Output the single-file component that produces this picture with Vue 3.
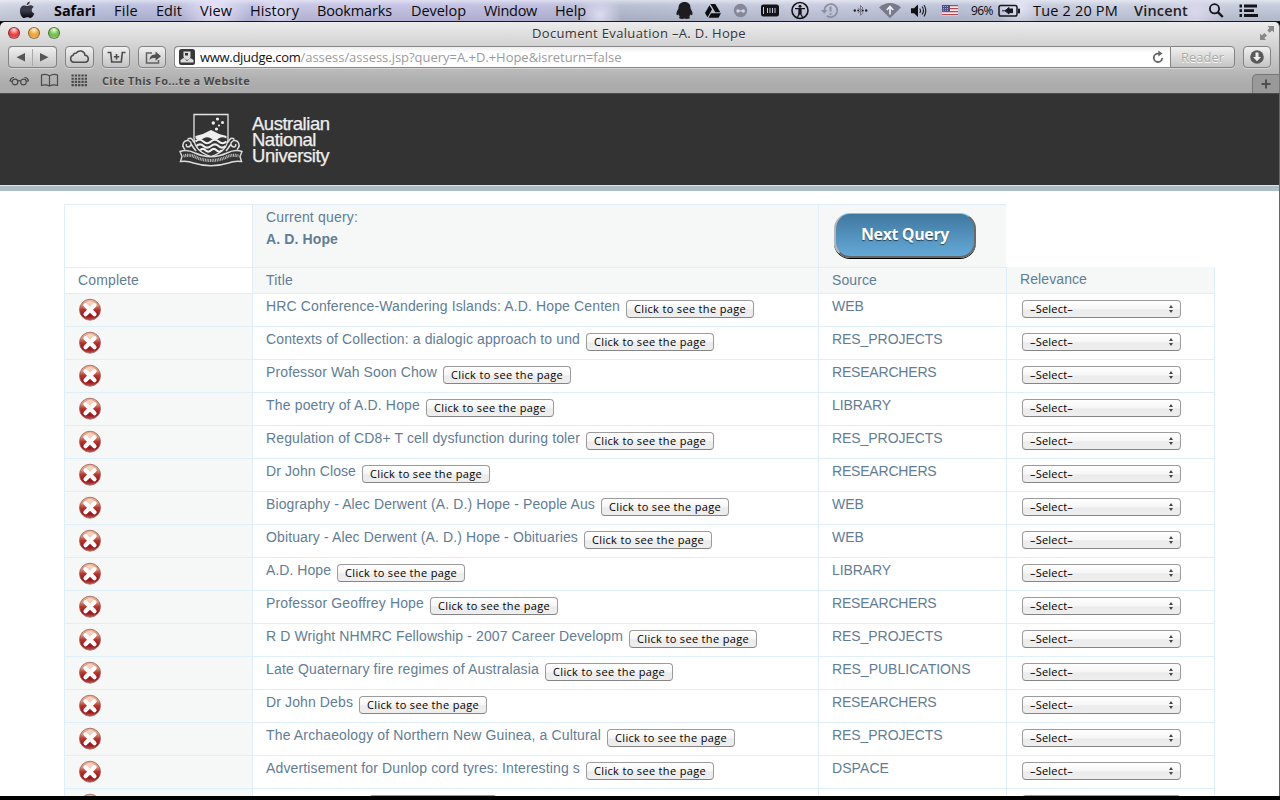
<script setup>
// Adjusts letter spacing so that a label takes a given width in pixels.
const vFit = {
  mounted(el, { value }) {
    const w = el.getBoundingClientRect().width
    el.style.letterSpacing = (value - w) / el.textContent.length + 'px'
  },
}

const menuSpec = [
  ['Safari', 54, 41.5], ['File', 114, 24], ['Edit', 156, 26], ['View', 200, 32], ['History', 250, 49],
  ['Bookmarks', 317, 75], ['Develop', 411, 55], ['Window', 484, 53], ['Help', 555, 31],
]
const menus = menuSpec.map(([label, x, w], i) => {
  const prev = i ? menuSpec[i - 1][1] + menuSpec[i - 1][2] : 0
  return { label, w, gap: x - prev }
})

const rows = [
  ['HRC Conference-Wandering Islands: A.D. Hope Centen', 354, 'WEB', 32],
  ['Contexts of Collection: a dialogic approach to und', 314, 'RES_PROJECTS', 110.5],
  ['Professor Wah Soon Chow', 171, 'RESEARCHERS', 104.5],
  ['The poetry of A.D. Hope', 154, 'LIBRARY', 59],
  ['Regulation of CD8+ T cell dysfunction during toler', 314, 'RES_PROJECTS', 110.5],
  ['Dr John Close', 90, 'RESEARCHERS', 104.5],
  ['Biography - Alec Derwent (A. D.) Hope - People Aus', 329, 'WEB', 32],
  ['Obituary - Alec Derwent (A. D.) Hope - Obituaries', 312, 'WEB', 32],
  ['A.D. Hope', 65, 'LIBRARY', 59],
  ['Professor Geoffrey Hope', 158, 'RESEARCHERS', 104.5],
  ['R D Wright NHMRC Fellowship - 2007 Career Developm', 357, 'RES_PROJECTS', 110.5],
  ['Late Quaternary fire regimes of Australasia', 273, 'RES_PUBLICATIONS', 138.5],
  ['Dr John Debs', 87, 'RESEARCHERS', 104.5],
  ['The Archaeology of Northern New Guinea, a Cultural', 335, 'RES_PROJECTS', 110.5],
  ['Advertisement for Dunlop cord tyres: Interesting s', 314, 'DSPACE', 57],
  ['Dr Graeme Farr', 97, 'RESEARCHERS', 104.5],
].map(([title, tw, source, sw]) => ({ title, tw, source, sw }))
</script>

<template>
  <div class="screen">
    <header class="menubar">
      <svg class="apple" viewBox="0 0 16 18" width="16" height="18">
        <defs>
          <linearGradient id="ap" x1="0" y1="0" x2="0" y2="1">
            <stop offset="0" stop-color="#34343c" /><stop offset=".55" stop-color="#3a3c4c" /><stop offset="1" stop-color="#05050c" />
          </linearGradient>
        </defs>
        <path fill="url(#ap)" d="M10.8 .6c.1 2-1.3 3.6-3.2 3.7C7.500 2.600 9 .9 10.800 .6zM8 5c.9 0 1.800-.8 3.300-.8 1.500 0 2.700.7 3.400 1.700-2.900 1.800-2.400 5.400.6 6.600-.7 2-2.200 4.500-3.900 4.500-1.200 0-1.600-.7-3-.7s-1.900.7-3 .7C3 17 .9 13.200.9 9.900.9 6.400 3 4.400 5.200 4.400 6.400 4.400 7.300 5 8 5z" />
      </svg>
      <nav class="menus">
        <span v-for="m in menus" :key="m.label" class="menu" :style="{ marginLeft: m.gap + 'px', width: m.w + 'px' }"><span v-fit="m.w" class="t">{{ m.label }}</span></span>
      </nav>
      <div class="status">
        <svg width="290" height="22" viewBox="675 0 290 22">
          <path fill="#1d1d20" d="M684.500 2c4 0 6 2.600 6 5.800 0 .8.300 1.300.7 2 1 1.700 1.600 3.600 1.200 5-.4.800-1 .3-1.800-.5-.3 1-.8 1.700-1.400 2.300 1 .4 1 2-.6 2.200-1.800.2-3 .2-4.100-.3-1.100.5-2.300.5-4.100.3-1.600-.2-1.600-1.800-.6-2.200-.6-.6-1.100-1.300-1.400-2.300-.8.800-1.400 1.300-1.800.5-.4-1.400.2-3.300 1.200-5 .4-.7.700-1.200.7-2C678.500 4.600 680.500 2 684.500 2z" />
          <g fill="#0c0c0e">
            <path d="M710.300 4h5l5 8.300h-5z" /><path d="M709.500 5.200l2.500 4.200-4.500 7.800-2.500-4.200z" /><path d="M711 13.300h10l-2.500 4.500h-10z" />
          </g>
          <circle cx="740.500" cy="10.500" r="6.700" fill="#85879a" />
          <g fill="#d4d5e2"><circle cx="738" cy="11" r="1.700" /><circle cx="743.300" cy="11" r="1.700" /><path d="M737.500 10.300h6.300v1.200h-6.300z" /></g>
          <rect x="761" y="4.500" width="18" height="12" rx="2.500" fill="#141418" />
          <path d="M763.500 7v7M767.500 8v5M770 8v5M772.500 8v5M775 8v5" stroke="#c9cadd" stroke-width="1" />
          <circle cx="800" cy="10.500" r="8" fill="none" stroke="#141418" stroke-width="1.600" />
          <circle cx="800" cy="6.300" r="1.500" fill="#141418" />
          <path d="M795 8.700h10M800 9v4l-2.500 4M800 13l2.500 4M799 9h2v4.500h-2z" stroke="#141418" stroke-width="1.300" fill="#141418" />
          <g stroke="#8d8fa0" fill="none" stroke-width="1.800">
            <path d="M824.300 10.500a6.500 6.500 0 1 1 2.500 5.200" /><path d="M830.500 6.500v5" stroke-width="2" /><path d="M830.500 13.200v1.600" stroke-width="2" />
          </g>
          <path d="M821 10h6.500l-3.200 3.800z" fill="#8d8fa0" />
          <path d="M858 7.800l5 5-2.500 2.500V5.500L863 8l-5 5" fill="none" stroke="#787a8a" stroke-width="1" />
          <g fill="#1f1f28"><circle cx="854.800" cy="10.500" r="1.200" /><circle cx="858.200" cy="10.500" r="1" /><circle cx="862.800" cy="10.500" r="1" /><circle cx="866.200" cy="10.500" r="1.200" /></g>
          <path d="M879 7.500c6-6 16-6 22 0l-11 10.800z" fill="#787a8a" />
          <path d="M890 14.500V7M886.800 10l3.200-3.400 3.200 3.400" stroke="#eceef8" stroke-width="1.700" fill="none" />
          <path d="M911 8.300h3l4-3.800v12.500l-4-3.800h-3z" fill="#111" />
          <path d="M919.800 8.500q1.600 2.200 0 4.500M922 6.500q3 4 0 8M924 5q3.600 5.700 0 11.500" fill="none" stroke="#1a1a20" stroke-width="1.100" />
          <rect x="942" y="5" width="16" height="11" fill="#f2eaee" />
          <path d="M942 5.600h16M942 8.600h16M942 11.600h16M942 14.600h16" stroke="#b6474f" stroke-width="1.400" />
          <rect x="942" y="5" width="8" height="6.500" fill="#4a4f88" />
          <path d="M943 6.500h6M943 8.500h6M943 10.300h6" stroke="#b9bde0" stroke-width=".8" stroke-dasharray="1 1" />
        </svg>
        <span class="pct"><span v-fit="22" class="t">96%</span></span>
        <svg class="batt" width="23" height="14" viewBox="0 0 23 14">
          <rect x="1" y="1.500" width="18" height="10.500" rx="1.800" fill="none" stroke="#17171d" stroke-width="1.500" />
          <rect x="20" y="4.500" width="2" height="5" rx=".8" fill="#17171d" />
          <path d="M4 6.800h4M15 5h-4V3.500L7 6.800 11 10V8.600h4" fill="#17171d" stroke="#17171d" stroke-width="1" />
        </svg>
        <span class="clock"><span v-fit="85" class="t">Tue 2 20 PM</span></span>
        <span class="user"><span v-fit="54" class="t">Vincent</span></span>
        <svg width="60" height="22" viewBox="0 0 60 22">
          <circle cx="14.500" cy="8.800" r="4.600" fill="none" stroke="#141418" stroke-width="1.800" /><path d="M17.800 12.200l5 4.800" stroke="#141418" stroke-width="2.400" />
          <path d="M39.500 6H42M39.500 10.700H42M39.500 15.500H42M44 6h13M44 10.700h10M44 15.500h14" stroke="#141418" stroke-width="2.800" />
        </svg>
      </div>
    </header>

    <section class="chrome">
      <div class="titlebar">
        <i class="light red"></i><i class="light amber"></i><i class="light green"></i>
        <span class="wtitle"><span v-fit="214" class="t">Document Evaluation –A. D. Hope</span></span>
        <svg class="expand" width="16" height="16" viewBox="0 0 16 16" fill="#888"><path d="M8.500 1H15v6.500l-2-2-2.300 2.300L8.200 5.300 10.500 3zM7 15H1V8.500l1.800 2L5.500 8 8 10.500 5.300 13z" /></svg>
      </div>
      <div class="toolbar">
        <div class="btn pair"><svg width="49" height="21" viewBox="0 0 49 21"><path d="M17 6v8.500L8.500 10.300zM32 6v8.500l8.500-4.200z" fill="#555" /><path d="M24.500 2v17" stroke="#a9a9a9" /></svg></div>
        <div class="btn b2"><svg width="27" height="20" viewBox="0 0 27 20"><path d="M7.800 15.300a3.600 3.600 0 0 1-.7-7A3.200 3.200 0 0 1 10.300 6 4.800 4.800 0 0 1 19 8.200a3.600 3.600 0 0 1 .5 7.100z" fill="none" stroke="#4c4c4c" stroke-width="1.500" /></svg></div>
        <div class="btn b3"><svg width="27" height="20" viewBox="0 0 27 20"><path d="M4.500 5.500h3.200l1 9.500h9.600l1-9.500h3.200M10.800 9.800h5.400M13.500 7.100v5.400" fill="none" stroke="#4c4c4c" stroke-width="1.600" /></svg></div>
        <div class="btn b4"><svg width="27" height="20" viewBox="0 0 27 20"><path d="M13 6H7.500v10h12v-3" fill="none" stroke="#606060" stroke-width="1.500" /><path d="M10.500 13c.5-4.500 3-5.500 6-5.500V4.500l5.500 4.800-5.500 4.500V11c-3 0-4.500.3-6 2z" fill="#505050" /></svg></div>
        <div class="url">
          <svg width="16" height="16" viewBox="0 0 16 16"><rect width="16" height="16" rx="2.500" fill="#383838" /><path d="M4.500 2.500h7v5c0 2-1.800 3-3.500 3.500-1.700-.5-3.500-1.500-3.500-3.500zM1.500 11l3-2 3.500 3 3.500-3 3 2v2.500H1.500z" fill="#ddd" /><path d="M6 4h3v2.500H6z" fill="#333" /></svg>
          <span class="host"><span v-fit="100.500" class="t">www.djudge.com</span></span><span class="path"><span v-fit="321" class="t">/assess/assess.jsp?query=A.+D.+Hope&amp;isreturn=false</span></span>
          <svg class="reload" width="12" height="14" viewBox="0 0 12 14"><path d="M10.200 8A4.200 4.200 0 1 1 6 3.600h1.500" fill="none" stroke="#666" stroke-width="1.800" /><path d="M6.300 .6v6L10.500 3.600z" fill="#666" /></svg>
        </div>
        <div class="reader"><span v-fit="43" class="t">Reader</span></div>
        <div class="btn b5"><svg width="26" height="20" viewBox="0 0 26 20"><circle cx="13" cy="10" r="6.800" fill="#5a5a5a" /><path d="M11.500 5.500h3V10h2.500L13 14.300 9 10h2.500z" fill="#efefef" /></svg></div>
      </div>
      <div class="bookmarks">
        <svg width="84" height="19" viewBox="0 -1 84 19" fill="none" stroke="#4a4a4a" stroke-width="1.200">
          <circle cx="6" cy="11" r="2.800" /><circle cx="14.500" cy="11" r="2.800" /><path d="M8.500 10.300q1.700-1.200 3.500 0M3.200 10.500L1 9.800q1-3.500 4-3.300M17.300 10.500l2.200-.7q-1-3.500-4-3.300" />
          <path d="M32.500 14.500V4q4-1.600 8 .8 4.500-2.400 8-.8v10.500q-4-1.500-8 .5-4-2-8-.5zM40.500 5v10" />
          <path d="M62.500 4.500h16M62.500 7.700h16M62.500 10.900h16M62.500 14.100h16" stroke-width="2.100" stroke-dasharray="2.300 1" />
        </svg>
        <span class="bm"><span v-fit="148" class="t">Cite This Fo...te a Website</span></span>
        <div class="newtab"><svg width="10" height="10" viewBox="0 0 10 10"><path d="M5 .5v9M.5 5h9" stroke="#4f4f4f" stroke-width="2" /></svg></div>
      </div>
    </section>

    <main class="page">
      <div class="banner">
        <svg class="crest" width="66" height="54" viewBox="0 0 66 54">
          <path d="M15 1.500h34V25q0 13-17 18.500Q15 38 15 25z" fill="#333" stroke="#e4e4e4" stroke-width="1.300" />
          <g fill="#eee"><circle cx="38.500" cy="6" r="1.600" /><circle cx="34.300" cy="10" r="1.700" /><circle cx="43.500" cy="9.500" r="1.500" /><circle cx="40" cy="12.500" r="1.100" /><circle cx="37.500" cy="16" r="1.600" /></g>
          <path d="M16.500 23q8-1.500 15.500-6Q39.500 21.500 47.500 23v2.500q-4-2.500-7.800 0t-7.700 0-7.700 0-7.800 0z" fill="#eee" />
          <path d="M16.500 28.500q4-3.500 7.800 0t7.700 0 7.700 0 7.800 0M17.500 33q3.500-3.300 7 0t7.500 0 7.500 0 7 0M21 37.300q2.800-2.800 5.500 0t5.500 0 5.500 0 5.500 0" fill="none" stroke="#eee" stroke-width="2.100" />
          <path d="M6 36.500q-4-4-.5-8 4.500-2.500 6.500 1.500.5 3.500-3 4-2.500-.5-1.500-3M12 31q2.500 4 5 7M8.500 26.500q4-3.500 6.500 3M58 36.500q4-4 .5-8-4.500-2.500-6.500 1.500-.5 3.500 3 4 2.500-.5 1.500-3M52 31q-2.500 4-5 7M55.500 26.500q-4-3.500-6.500 3" fill="none" stroke="#ddd" stroke-width="1.500" />
          <path d="M1 38.500q7-2.500 15 1.500 16 7.500 32 0 8-4 15-1.500l-2 5 1.500 5q-7-1-13 1.500-17.500 5.500-35 0-6-2.500-13-1.500l1.500-5z" fill="#333" stroke="#ddd" stroke-width="1.400" />
          <path d="M4.500 43q7-2 13 1.500 14.500 6 29 0 6-3.500 13-1.500" fill="none" stroke="#bbb" stroke-width="3.200" stroke-dasharray="1 .7" />
        </svg>
        <div class="anu">
          <div><span v-fit="77.500" class="t">Australian</span></div>
          <div><span v-fit="64" class="t">National</span></div>
          <div><span v-fit="77" class="t">University</span></div>
        </div>
      </div>
      <div class="rule"></div>

      <div class="grid">
        <div class="row top">
          <div class="cell"></div>
          <div class="cell tint"><div><span v-fit="92" class="t">Current query:</span></div><div><b v-fit="72" class="t">A. D. Hope</b></div></div>
          <div class="cell tint"><button class="next"><span v-fit="88" class="t">Next Query</span></button></div>
        </div>
        <div class="row head">
          <div class="cell"><span v-fit="61" class="t">Complete</span></div>
          <div class="cell tint"><span v-fit="27" class="t">Title</span></div>
          <div class="cell tint"><span v-fit="45" class="t">Source</span></div>
          <div class="cell tint last"><span v-fit="67" class="t">Relevance</span></div>
        </div>
        <div v-for="(r, i) in rows" :key="i" class="row data">
          <div class="cell tint">
            <svg class="cross" width="24" height="24" viewBox="0 0 24 24">
              <defs>
                <linearGradient id="rg" x1="0" y1="0" x2="0" y2="1">
                  <stop offset="0" stop-color="#f3b79c" /><stop offset=".3" stop-color="#dd8a72" /><stop offset=".5" stop-color="#b8342c" /><stop offset=".8" stop-color="#9c1216" /><stop offset="1" stop-color="#bb5a52" />
                </linearGradient>
              </defs>
              <circle cx="12" cy="11.700" r="10.500" fill="url(#rg)" stroke="#98605a" stroke-width=".8" />
              <path d="M5 7Q12-1 19 7q-7 4-14 0z" fill="#fde3d0" opacity=".75" />
              <path d="M7.500 7.300l9 9M16.500 7.300l-9 9" stroke="#fff" stroke-width="4.200" stroke-linecap="round" />
            </svg>
          </div>
          <div class="cell flex"><span class="title" :style="{ width: r.tw + 'px' }"><span v-fit="r.tw" class="t">{{ r.title }}</span></span><button class="mac see"><span v-fit="112" class="t">Click to see the page</span></button></div>
          <div class="cell"><span v-fit="r.sw" class="t">{{ r.source }}</span></div>
          <div class="cell last"><div class="mac select"><span v-fit="43" class="t">–Select–</span><svg width="6" height="10" viewBox="0 0 6 10"><path d="M3 1L5 4H1zM3 9L1 6h4z" fill="#444" /></svg></div></div>
        </div>
      </div>
    </main>
    <div class="edge"></div>
  </div>
</template>

<style>
html, body { margin: 0; overflow: hidden; background: #000; }
</style>

<style scoped>
.screen { position: relative; box-sizing: border-box; width: 1280px; height: 800px; overflow: hidden; background: #000; font-family: "Open Sans", "Noto Sans", sans-serif; color: #111; }
.t { display: inline-block; white-space: pre; }
svg { display: block; flex: none; }
.menubar { position: relative; display: flex; height: 21px; border-bottom: 1px solid #15152e; line-height: 21px; font-size: 14.5px; color: #0a0a0c;
  background: radial-gradient(circle at 215px 8px, #e6e3f8 0, transparent 34px), radial-gradient(circle at 278px 10px, #dfdcf4 0, transparent 24px), radial-gradient(circle at 600px 15px, #dcdaf0 0, transparent 22px), radial-gradient(circle at 1020px 6px, #e3e3f4 0, transparent 24px), radial-gradient(circle at 1195px 12px, #dad8ec 0, transparent 30px), linear-gradient(#ffffff80, #ffffff10 5px, #00000018), linear-gradient(90deg, #cfd4e2 0, #b9bede 130px, #c5c3e5 340px, #bdbce0 540px, #b6bdd2 620px, #c6cae0 800px, #bcc3d8 960px, #c9cee0 1100px, #c2cadb); }
.apple { position: absolute; left: 19px; top: 1px; }
.menus { display: flex; width: 675px; }
.menu { white-space: nowrap; }
.menu:first-child { font-weight: 700; }
.status { display: flex; }
.pct { width: 32px; margin-left: 6px; font-size: 12px; }
.batt { margin: 4px 0 0 -5px; }
.clock { width: 102px; margin-left: 12px; margin-right: -1px; }
.user { width: 66px; font-weight: 600; color: #222; }

.chrome { width: 1279px; height: 71px; border-right: 1px solid #777; border-bottom: 1px solid #4b4b4b; border-radius: 5px 5px 0 0; background: linear-gradient(#ececec, #d2d2d2 24px, #acacac 62px, #aaa); }
.titlebar { position: relative; display: flex; height: 24px; padding-left: 7px; }
.light { width: 12px; height: 12px; margin: 5px 7px 0 0; box-sizing: border-box; border-radius: 50%; border: 1px solid #0006; }
.light.red { margin-left: 1px; background: radial-gradient(circle at 50% 20%, #ffe4e4, #f04b4f 45%, #e33d43 65%, #ff9a9a); }
.light.amber { margin-left: 1px; background: radial-gradient(circle at 50% 20%, #fff2d0, #f0a945 45%, #e8a03c 65%, #ffe58f); }
.light.green { margin-left: 1px; background: radial-gradient(circle at 50% 20%, #eeffdc, #7cc456 45%, #6fbb4c 65%, #c9f59c); }
.wtitle { margin-left: 465px; line-height: 23px; font-size: 13px; color: #333; text-shadow: 0 1px #fff8; }
.expand { position: absolute; right: 4px; top: 3px; }
.toolbar { display: flex; height: 24px; padding-left: 8px; }
.btn, .reader { box-sizing: border-box; height: 22px; border: 1px solid #838383; border-radius: 4px; background: linear-gradient(#f0f0f0, #c4c4c4); box-shadow: 0 1px #ffffff60; }
.pair { width: 49px; border-width: 1px 0; box-shadow: inset 1px 0 #838383, inset -1px 0 #838383, 0 1px #ffffff60; }
.b2, .b3, .b4, .b5 { width: 28px; }
.b2 { margin-left: 8px; width: 29px; }
.b3 { margin-left: 8px; }
.b4 { margin-left: 8px; }
.b5 { margin-left: 8px; }
.url { position: relative; box-sizing: border-box; display: flex; width: 996px; height: 22px; margin-left: 8px; padding: 2px 0 0 4px; border: 1px solid #888; border-radius: 4px 0 0 4px; border-right: 0; background: linear-gradient(#eee, #fff 6px); line-height: 17px; font-size: 13px; box-shadow: 0 1px #ffffff60; }
.host { width: 100.500px; margin-left: 5px; color: #111; white-space: nowrap; }
.path { color: #9b9b9b; white-space: nowrap; }
.reload { position: absolute; right: 6px; top: 3px; }
.reader { width: 65px; border-radius: 0 4px 4px 0; text-align: center; line-height: 20px; font-size: 13px; color: #aaa; text-shadow: 0 1px #fff; }
.bookmarks { display: flex; height: 23px; padding-left: 9px; }
.bm { margin-left: 9px; line-height: 21px; font-size: 11px; font-weight: 700; color: #484848; text-shadow: 0 1px #fff6; }
.newtab { display: flex; align-items: center; justify-content: center; box-sizing: border-box; width: 27px; height: 19px; margin: 4px 0 0 auto; border: 1px solid #777; border-width: 1px 0 0 1px; border-radius: 5px 0 0 0; background: #999; }

.page { position: relative; width: 1279px; height: 702px; overflow: hidden; background: #fff; border-right: 1px solid #666; font-family: "Liberation Sans", Arial, sans-serif; font-size: 14px; color: #5f7d95; }
.banner { display: flex; height: 91px; background: #333; }
.crest { margin: 19px 0 0 179px; }
.anu { margin: 22px 0 0 7px; font-size: 18.500px; line-height: 16px; color: #eee; -webkit-text-stroke: .25px #eee; }
.anu div { height: 16px; }
.anu .t { height: 16px; }
.rule { height: 5px; border-top: 1px solid #dbe2e6; background: #adbdc4; }
.grid { margin: 13px 0 0 64px; }
.row { display: grid; grid-template-columns: 188px 566px 188px 209px; }
.cell { box-sizing: border-box; padding-left: 13px; border-left: 1px solid #dfeefb; border-bottom: 1px solid #dfeefb; white-space: nowrap; line-height: 25px; }
.tint { background: #f6f8f8; }
.top .cell { height: 64px; border-top: 1px solid #dfeefb; line-height: 22px; padding-top: 1px; }
.top .cell:last-child { padding: 8px 0 0 15px; }
.head .cell { height: 26px; }
.head .cell:last-child { height: 27px; margin-top: -1px; }
.last { border-right: 1px solid #dfeefb; }
.data .cell { height: 33px; }
.data .flex { display: flex; }
.cross { margin: 4px 0 0; }
.next { box-sizing: border-box; display: flex; align-items: center; justify-content: center; width: 142px; height: 45px; padding: 0 0 2px; border: 2px solid; border-width: 1px 2px 2px; border-color: #7fc0ee #6a6a6a #666 #b5b5b5; border-radius: 16px; background: linear-gradient(#3f789f, #65a9d8); box-shadow: 0 1px #000; color: #fff; font: 700 16px "Open Sans", sans-serif; text-shadow: 0 1px 1px #0009; }
.mac { box-sizing: border-box; height: 18px; margin: 6px 0 0; padding: 0; border: 1px solid #9b9b9b; border-bottom-color: #858585; border-radius: 4px; background: linear-gradient(#fff, #f6f6f6 50%, #ebebeb 55%, #eee); color: #000; font: 11px/16px "Open Sans", sans-serif; }
.see { width: 128px; margin-left: 6px; text-align: center; }
.select { display: flex; align-items: center; justify-content: space-between; width: 159px; margin-left: 2px; padding: 0 6px 0 7px; }
.edge { height: 4px; background: #000; }
</style>
